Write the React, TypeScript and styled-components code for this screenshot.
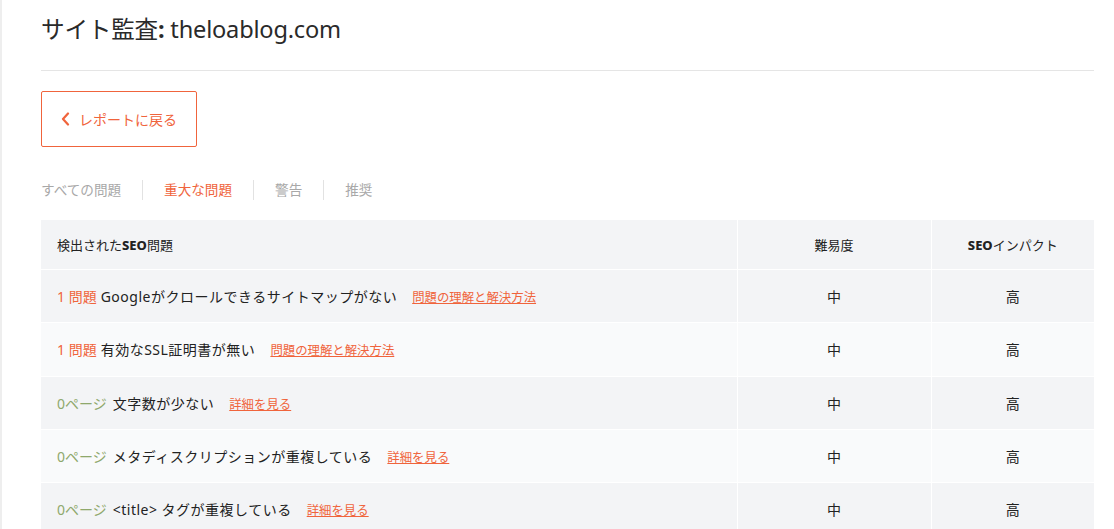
import styled, { createGlobalStyle } from 'styled-components'

const GlobalStyle = createGlobalStyle`
  html, body {
    margin: 0;
    padding: 0;
    background: #fff;
  }
  body {
    font-family: 'Noto Sans', 'Noto Sans CJK JP', sans-serif;
    color: #222;
  }
`

const ORANGE = '#f0643c'

type Row = {
  count: string
  kind: 'issue' | 'page'
  label: string
  link: string
  difficulty: string
  impact: string
}

const rows: Row[] = [
  { count: '1 問題', kind: 'issue', label: 'Googleがクロールできるサイトマップがない', link: '問題の理解と解決方法', difficulty: '中', impact: '高' },
  { count: '1 問題', kind: 'issue', label: '有効なSSL証明書が無い', link: '問題の理解と解決方法', difficulty: '中', impact: '高' },
  { count: '0ページ', kind: 'page', label: '文字数が少ない', link: '詳細を見る', difficulty: '中', impact: '高' },
  { count: '0ページ', kind: 'page', label: 'メタディスクリプションが重複している', link: '詳細を見る', difficulty: '中', impact: '高' },
  { count: '0ページ', kind: 'page', label: '<title> タグが重複している', link: '詳細を見る', difficulty: '中', impact: '高' },
]

const Page = styled.div`
  border-left: 2px solid #eeeeee;
  min-height: 529px;
  box-sizing: border-box;
  padding: 0 20px 0 39px;
`

const Header = styled.header`
  height: 71px;
  border-bottom: 1px solid #e5e5e5;
  display: flex;
  align-items: center;
  padding-bottom: 14px;
  box-sizing: border-box;
`

const Title = styled.h1`
  margin: 0;
  font-size: 23.6px;
  font-weight: 400;
  color: #2a2a2a;
  letter-spacing: -0.2px;

  b {
    font-weight: 700;
  }
`

const BackButton = styled.button`
  margin-top: 20px;
  width: 156px;
  height: 56px;
  border: 1px solid ${ORANGE};
  border-radius: 2px;
  background: #fff;
  color: ${ORANGE};
  font-family: inherit;
  font-size: 14px;
  display: flex;
  align-items: center;
  justify-content: center;
  gap: 9px;
  padding: 0;
  cursor: pointer;
`

const Tabs = styled.nav`
  display: flex;
  align-items: center;
  margin-top: 32px;
  height: 22px;
`

const Tab = styled.span<{ $active?: boolean }>`
  font-size: 13.6px;
  color: ${(p) => (p.$active ? ORANGE : '#a8a8a8')};
  padding: 0 21px;
  line-height: 20px;
  border-left: 1px solid #e2e2e2;

  &:first-child {
    padding-left: 0;
    border-left: none;
  }
`

const Table = styled.table`
  margin-top: 19px;
  width: 100%;
  border-collapse: collapse;
  font-size: 14px;
`

const HeadCell = styled.th<{ $center?: boolean }>`
  background: #f3f4f6;
  height: 49px;
  font-weight: 400;
  font-size: 13px;
  color: #222;
  text-align: ${(p) => (p.$center ? 'center' : 'left')};
  padding: 0 16px;
  border-right: 1px solid #fff;
  border-bottom: 1px solid #fff;

  &:last-child {
    border-right: none;
  }

  b {
    font-weight: 800;
  }
`

const BodyRow = styled.tr<{ $alt?: boolean }>`
  background: ${(p) => (p.$alt ? '#f9fafb' : '#f3f4f6')};
`

const Cell = styled.td<{ $center?: boolean }>`
  height: 52.3px;
  padding: 0 16px;
  text-align: ${(p) => (p.$center ? 'center' : 'left')};
  border-right: 1px solid #fff;
  border-bottom: 1px solid #fff;
  font-size: 14px;
  color: #222;

  &:last-child {
    border-right: none;
  }
`

const Count = styled.span<{ $kind: 'issue' | 'page' }>`
  color: ${(p) => (p.$kind === 'issue' ? ORANGE : '#8fa86c')};
  margin-right: ${(p) => (p.$kind === 'issue' ? '4px' : '6px')};
`

const Label = styled.span`
  color: #222;
  letter-spacing: 0.5px;
`

const Link = styled.a`
  color: ${ORANGE};
  font-size: 12.4px;
  text-decoration: underline;
  margin-left: 15px;
  cursor: pointer;
`

const Chevron = () => (
  <svg width="9" height="14" viewBox="0 0 9 14" fill="none">
    <path d="M7 1.5 L2 7 L7 12.5" stroke={ORANGE} strokeWidth="2.2" strokeLinecap="round" strokeLinejoin="round" />
  </svg>
)

export default function App() {
  return (
    <>
      <GlobalStyle />
      <Page>
        <Header>
          <Title>
            サイト監査<b>:</b> theloablog.com
          </Title>
        </Header>
        <BackButton>
          <Chevron />
          レポートに戻る
        </BackButton>
        <Tabs>
          <Tab>すべての問題</Tab>
          <Tab $active>重大な問題</Tab>
          <Tab>警告</Tab>
          <Tab>推奨</Tab>
        </Tabs>
        <Table>
          <colgroup>
            <col style={{ width: 696 }} />
            <col style={{ width: 194 }} />
            <col />
          </colgroup>
          <thead>
            <tr>
              <HeadCell>
                検出された<b>SEO</b>問題
              </HeadCell>
              <HeadCell $center>難易度</HeadCell>
              <HeadCell $center>
                <b>SEO</b>インパクト
              </HeadCell>
            </tr>
          </thead>
          <tbody>
            {rows.map((r, i) => (
              <BodyRow key={i} $alt={i % 2 === 1}>
                <Cell>
                  <Count $kind={r.kind}>{r.count}</Count>
                  <Label>{r.label}</Label>
                  <Link>{r.link}</Link>
                </Cell>
                <Cell $center>{r.difficulty}</Cell>
                <Cell $center>{r.impact}</Cell>
              </BodyRow>
            ))}
          </tbody>
        </Table>
      </Page>
    </>
  )
}
